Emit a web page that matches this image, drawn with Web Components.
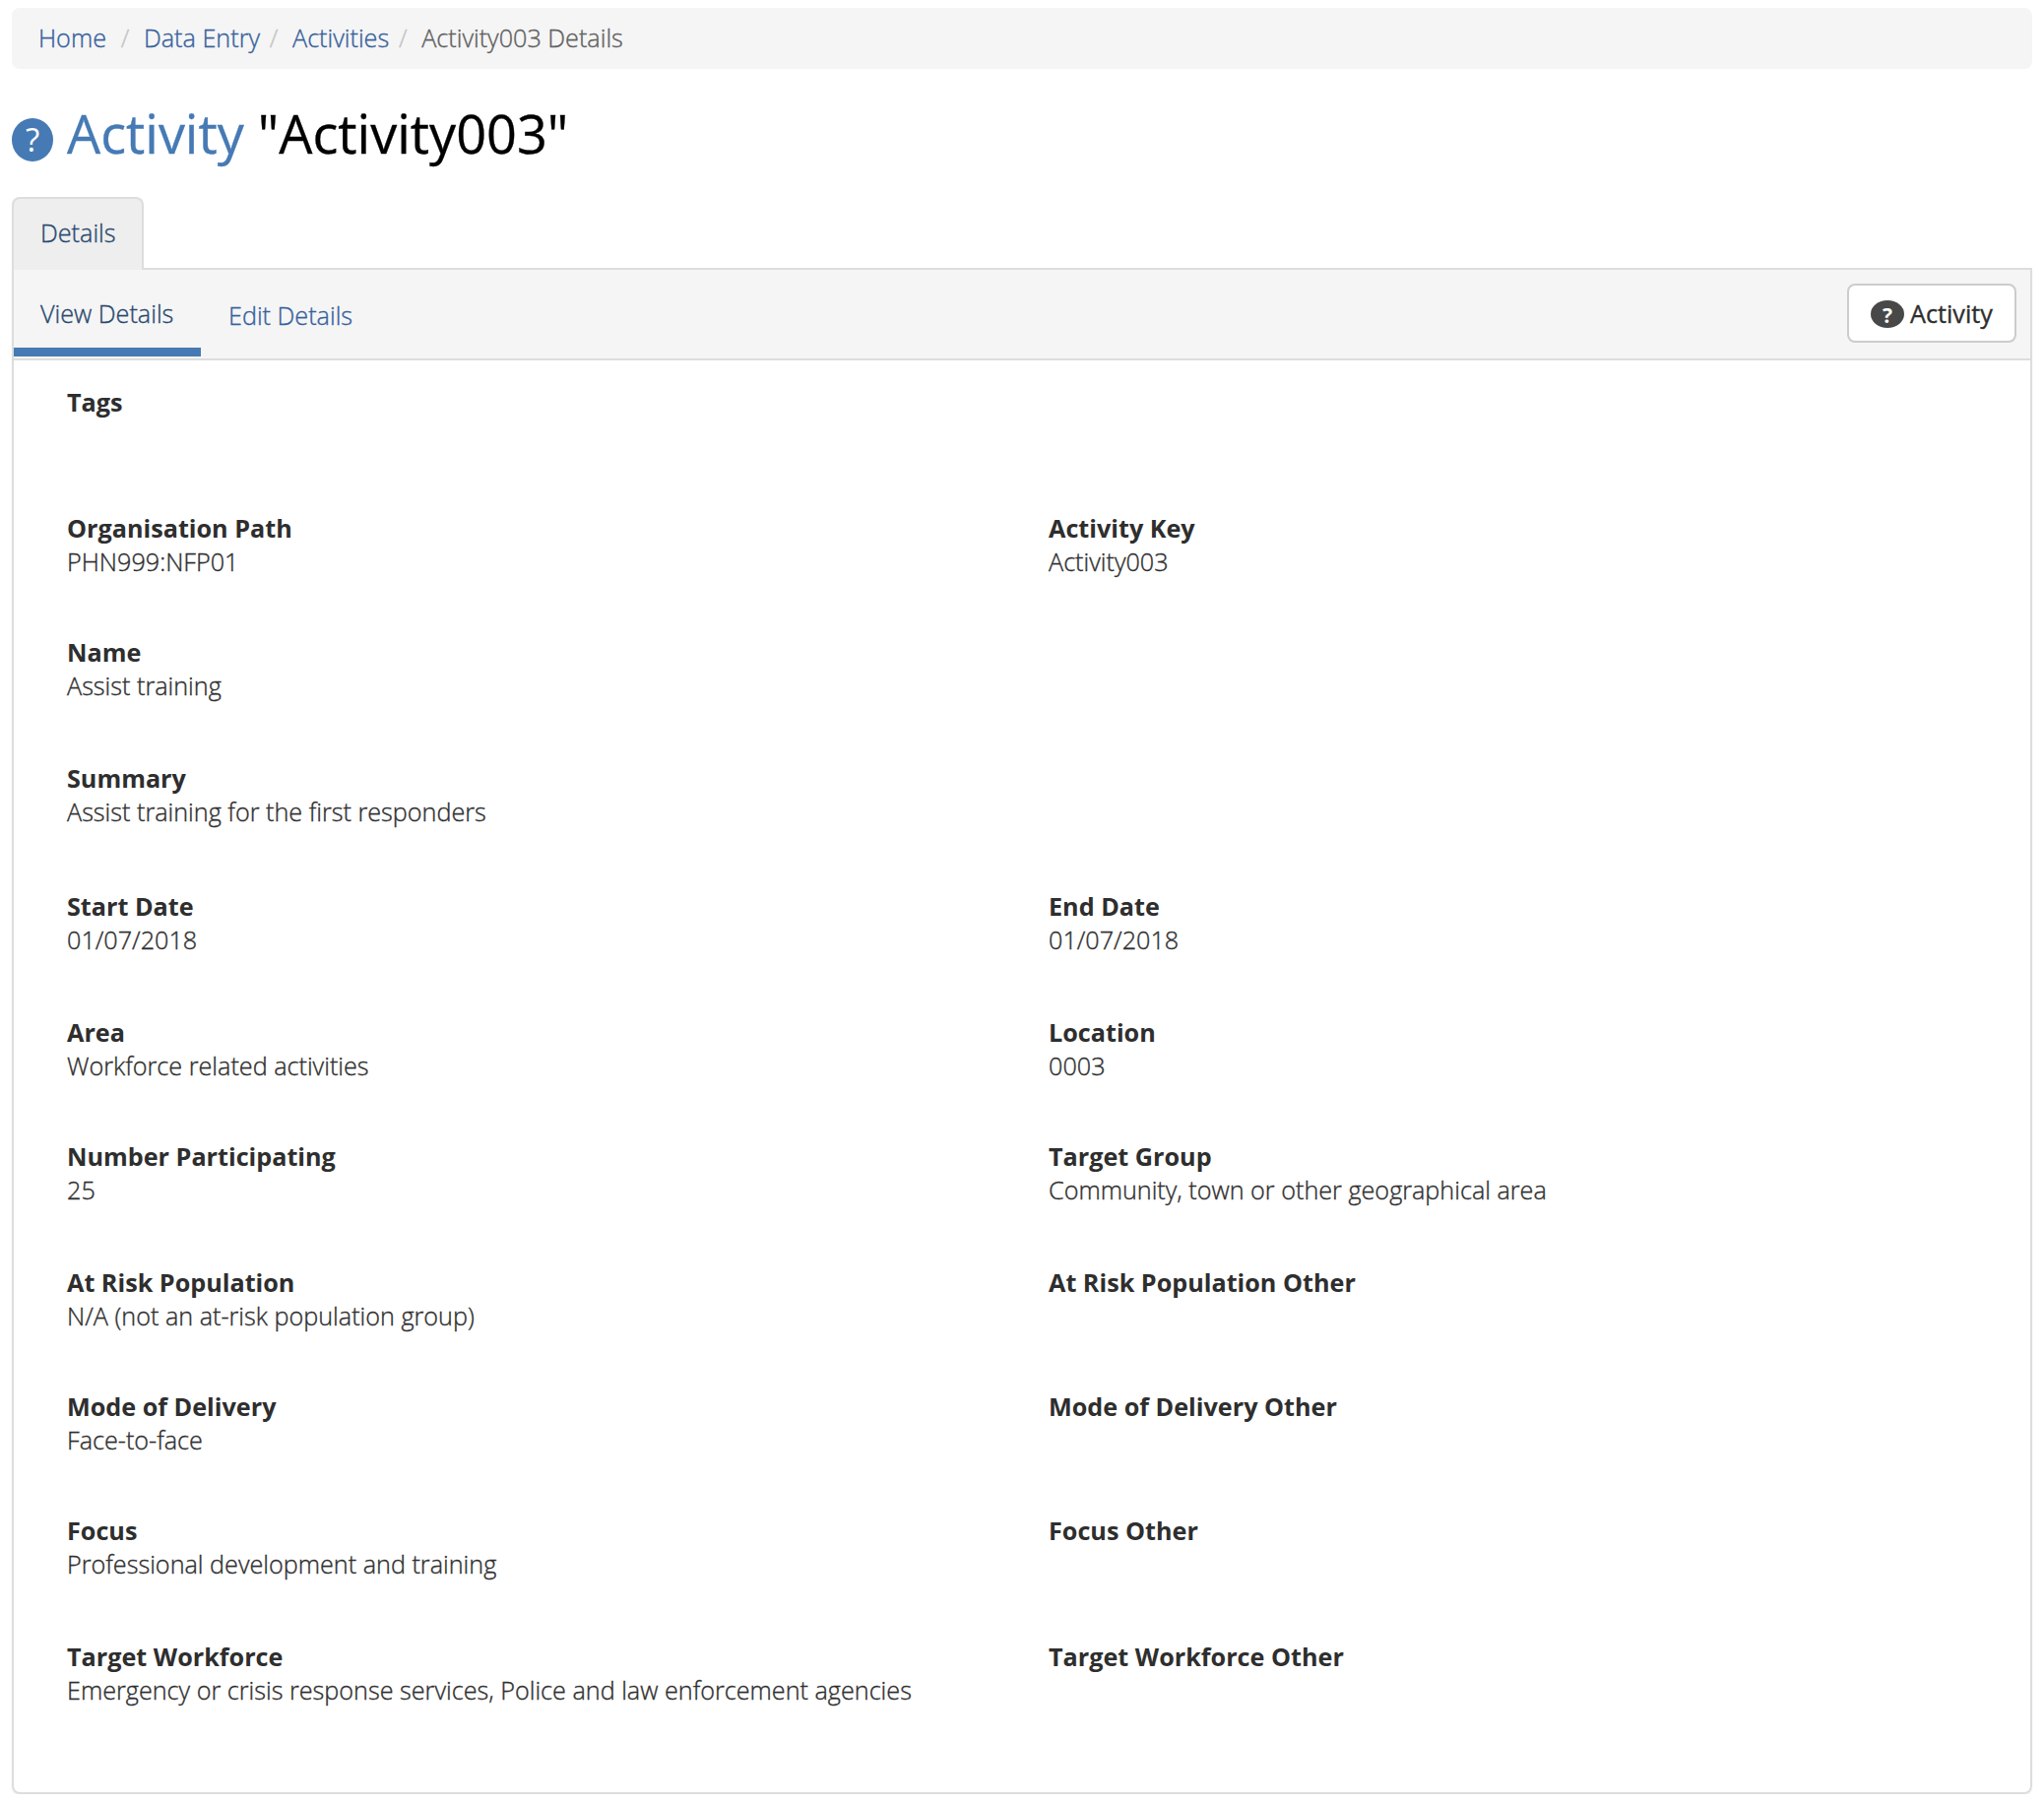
<!DOCTYPE html>
<html lang="en">
<head>
<meta charset="utf-8">
<title>Activity003 Details</title>
<style>
  body { margin: 0; background: #fff; color: #2e2e2e; font: 300 25.2px/34px "Open Sans", "Noto Sans", sans-serif; -webkit-text-stroke: 0.35px; }
</style>
</head>
<body>
<activity-page></activity-page>
<script>
const define = (name, html) => {
  const template = document.createElement('template');
  template.innerHTML = html;
  customElements.define(name, class extends HTMLElement {
    constructor() {
      super();
      this.attachShadow({ mode: 'open' }).append(template.content.cloneNode(true));
    }
  });
};

define('crumb-item', `
  <style>
    :host { display: flex; color: #35619c; white-space: nowrap; }
    :host([current]) { color: #606060; }
    i { display: none; box-sizing: border-box; font-style: normal; color: #c4c4c4; width: var(--gap, 38px); padding-right: var(--shift, 0px); text-align: center; }
    :host([follow]) i { display: block; }
  </style><i>/</i><span><slot></slot></span>`);

define('crumb-bar', `
  <style>
    :host { display: flex; height: 62px; box-sizing: border-box; padding: 13px 27px; background: #f5f5f5; border-radius: 8px; }
  </style><slot></slot>`);

define('help-icon', `
  <style>
    :host { display: flex; align-items: center; justify-content: center; flex: none;
      width: 42px; height: 44px; border-radius: 50%; background: #467ab4; color: #fff; font-size: 33px; font-weight: 400; line-height: 44px; -webkit-text-stroke: 0; }
    :host([dark]) { width: 34px; height: 28px; background: #484848; font-size: 21px; font-weight: 700; line-height: 28px; }
    :host([dark]) span { margin-top: 1px; }
  </style><span>?</span>`);

define('page-title', `
  <style>
    :host { display: flex; align-items: flex-start; height: 130px; box-sizing: border-box; padding-top: 28px; color: #000; font-size: 54px; font-weight: 400; line-height: 74px; white-space: pre; }
    help-icon { margin: 22px 14px 0 0; }
    b { font-weight: 400; color: #467ab4; }
  </style><help-icon></help-icon><b><slot name="kind"></slot></b><span> <slot></slot></span>`);

define('main-tab', `
  <style>
    :host { display: block; position: relative; z-index: 1; width: 134px; height: 74px; margin-bottom: -2px; box-sizing: border-box; padding: 17px 0 0 27px;
      border: 2px solid #ddd; border-bottom: 0; border-radius: 8px 8px 0 0; background: #eee; color: #28486f; }
  </style><slot></slot>`);

define('sub-tab', `
  <style>
    :host { display: block; box-sizing: border-box; height: 88px; padding: 29px 27px 0 28px; color: #35619c; white-space: nowrap; }
    :host([active]) { padding: 27px 0 0 27px; border-bottom: 9px solid #467ab4; color: #28486f; width: 190px; }
  </style><slot></slot>`);

define('help-button', `
  <style>
    :host { display: flex; align-items: center; gap: 6px; box-sizing: border-box; width: 172px; height: 60px; padding: 2px 0 0 22px; margin: 14px 14px 0 auto;
      border: 2px solid #ccc; border-radius: 8px; background: #fff; font-weight: 400; font-size: 25.2px; }
    span { margin-top: -3px; }
  </style><help-icon dark></help-icon><span><slot></slot></span>`);

define('sub-nav', `
  <style>
    :host { display: flex; align-items: flex-start; height: 90px; background: #f5f5f5; border-bottom: 2px solid #ddd; }
  </style><slot></slot>`);

define('detail-panel', `
  <style>
    :host { display: flex; flex-direction: column; box-sizing: border-box; height: 1550px; border: 2px solid #ddd; border-radius: 0 0 8px 8px; box-shadow: 0 2px 2px rgba(0,0,0,.05); }
    section { padding: 25px 0 0 54px; }
  </style><slot name="nav"></slot><section><slot></slot></section>`);

define('field-row', `
  <style>
    :host { display: grid; grid-template-columns: 997px 1fr; height: 128px; }
    :host([size="s"]) { height: 126px; }
    :host([size="l"]) { height: 130px; }
  </style><slot></slot>`);

define('data-field', `
  <style>
    :host { display: block; }
    strong { display: block; font-weight: 700; -webkit-text-stroke: 0; }
  </style><strong><slot name="label"></slot></strong><slot></slot>`);

define('activity-page', `
  <style>:host { display: block; padding: 8px 12px 0; }</style>
  <crumb-bar>
    <crumb-item>Home</crumb-item>
    <crumb-item follow>Data Entry</crumb-item>
    <crumb-item follow style="--gap:33px;--shift:5px">Activities</crumb-item>
    <crumb-item follow current style="--gap:33px;--shift:5px">Activity003 Details</crumb-item>
  </crumb-bar>
  <page-title><span slot="kind">Activity</span>"Activity003"</page-title>
  <main-tab>Details</main-tab>
  <detail-panel>
    <sub-nav slot="nav"><sub-tab active>View Details</sub-tab><sub-tab>Edit Details</sub-tab><help-button>Activity</help-button></sub-nav>
    <field-row><data-field><span slot="label">Tags</span></data-field></field-row>
    <field-row size="s"><data-field><span slot="label">Organisation Path</span>PHN999:NFP01</data-field><data-field><span slot="label">Activity Key</span>Activity003</data-field></field-row>
    <field-row><data-field><span slot="label">Name</span>Assist training</data-field></field-row>
    <field-row size="l"><data-field><span slot="label">Summary</span>Assist training for the first responders</data-field></field-row>
    <field-row><data-field><span slot="label">Start Date</span>01/07/2018</data-field><data-field><span slot="label">End Date</span>01/07/2018</data-field></field-row>
    <field-row size="s"><data-field><span slot="label">Area</span>Workforce related activities</data-field><data-field><span slot="label">Location</span>0003</data-field></field-row>
    <field-row><data-field><span slot="label">Number Participating</span>25</data-field><data-field><span slot="label">Target Group</span>Community, town or other geographical area</data-field></field-row>
    <field-row size="s"><data-field><span slot="label">At Risk Population</span>N/A (not an at-risk population group)</data-field><data-field><span slot="label">At Risk Population Other</span></data-field></field-row>
    <field-row size="s"><data-field><span slot="label">Mode of Delivery</span>Face-to-face</data-field><data-field><span slot="label">Mode of Delivery Other</span></data-field></field-row>
    <field-row><data-field><span slot="label">Focus</span>Professional development and training</data-field><data-field><span slot="label">Focus Other</span></data-field></field-row>
    <field-row><data-field><span slot="label">Target Workforce</span>Emergency or crisis response services, Police and law enforcement agencies</data-field><data-field><span slot="label">Target Workforce Other</span></data-field></field-row>
  </detail-panel>`);
</script>
</body>
</html>
